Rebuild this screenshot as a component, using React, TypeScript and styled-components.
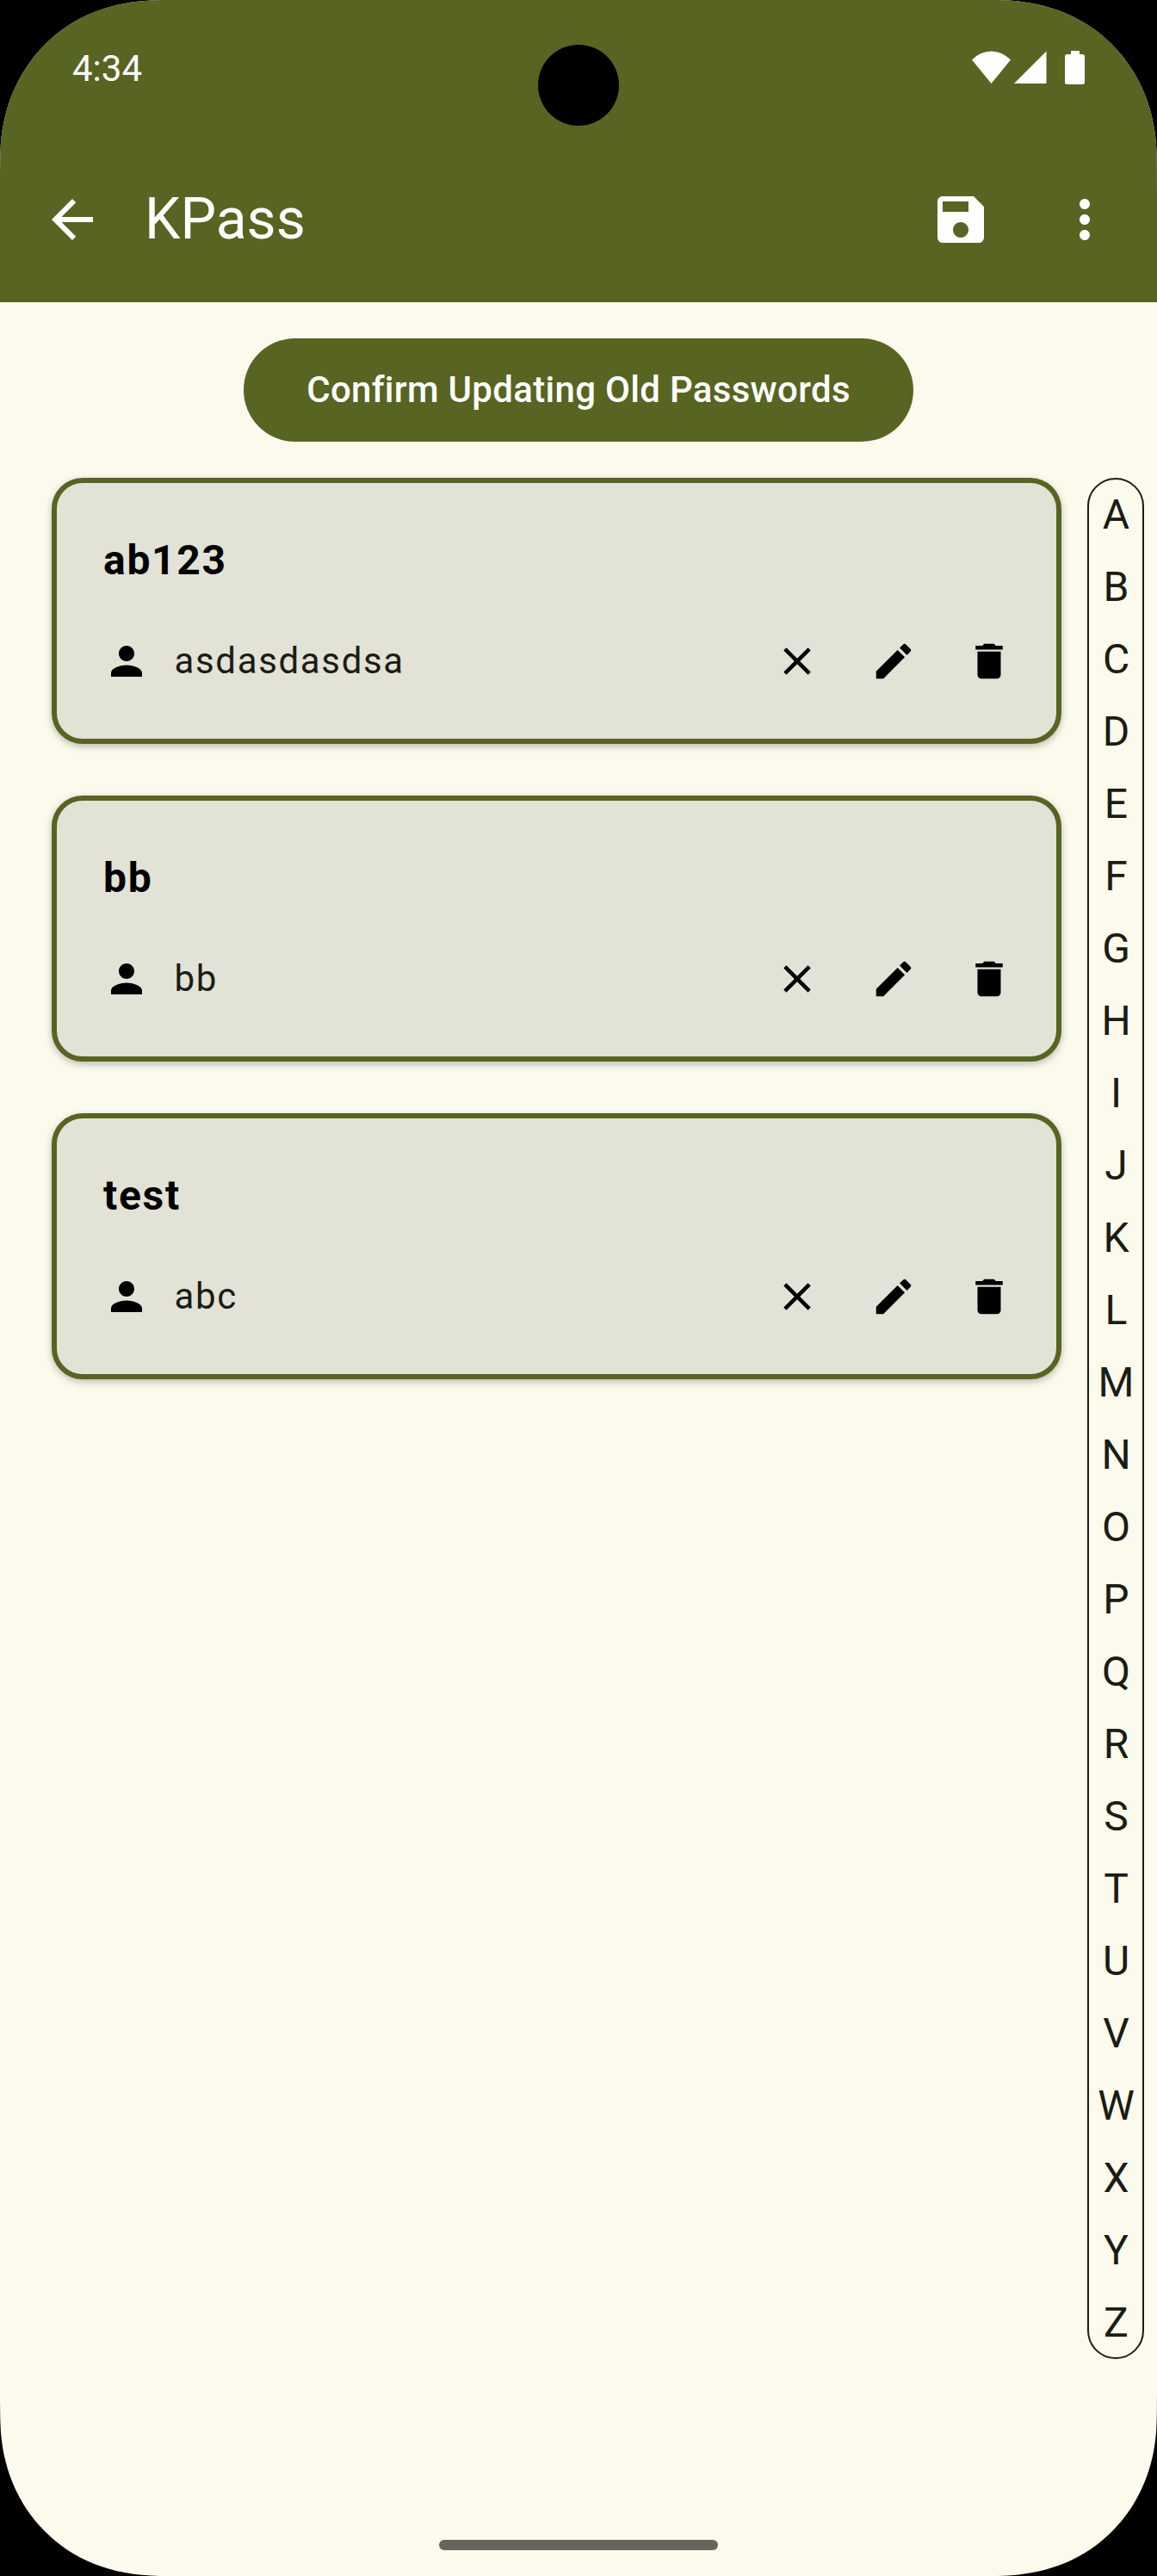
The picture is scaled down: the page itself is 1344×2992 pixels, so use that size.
import React from "react";
import styled, { createGlobalStyle } from "styled-components";

const olive = "#586422";
const paper = "#fcfaec";
const ink = "#1b1c15";

const GlobalStyle = createGlobalStyle`
  * { box-sizing: border-box; }
  body { margin: 0; background: #000; }
`;

const SCREEN_SHAPE =
  "M0 227C0 205 0 190 0.5 176C2 128 20 84 52 52C85 19 128 1 186 0" +
  "H1158C1216 1 1259 19 1292 52C1324 84 1342 128 1343.5 176C1344 190 1344 205 1344 227" +
  "V2765C1344 2787 1344 2802 1343.5 2816C1342 2864 1324 2908 1292 2940C1259 2973 1216 2991 1158 2992" +
  "H186C128 2991 85 2973 52 2940C20 2908 2 2864 0.5 2816C0 2802 0 2787 0 2765Z";

const Screen = styled.div`
  position: relative;
  display: flex;
  flex-direction: column;
  width: 1344px;
  height: 2992px;
  overflow: hidden;
  background: ${paper};
  color: ${ink};
  font-family: Roboto, "Noto Sans", sans-serif;
  clip-path: path("${SCREEN_SHAPE}");
`;

const Header = styled.header`
  height: 351px;
  flex: none;
  background: ${olive};
  color: #fff;
`;

const StatusBar = styled.div`
  display: flex;
  align-items: flex-start;
  justify-content: space-between;
  height: 159px;
  padding: 59px 84px 0;
`;

const Clock = styled.span`
  margin-top: -4px;
  font-size: 42px;
  line-height: 50px;
`;

const StatusIcons = styled.svg`
  width: 131px;
  height: 39px;
`;

const CameraHole = styled.div`
  position: absolute;
  left: 625px;
  top: 52px;
  width: 94px;
  height: 94px;
  border-radius: 50%;
  background: #000;
`;

const AppBar = styled.div`
  display: flex;
  align-items: center;
  height: 192px;
  padding: 0 48px;
`;

const Title = styled.h1`
  flex: 1;
  margin: 0 0 0 48px;
  font-size: 66px;
  line-height: 84px;
  font-weight: 400;
`;

const BarActions = styled.div`
  display: flex;
  gap: 72px;
`;

const Icon = styled.svg<{ $size: number }>`
  display: block;
  width: ${(p) => p.$size}px;
  height: ${(p) => p.$size}px;
  flex: none;
  fill: currentColor;
`;

const ConfirmButton = styled.button`
  align-self: center;
  flex: none;
  width: 778px;
  height: 120px;
  margin: 42px 0;
  padding: 0;
  border: 0;
  border-radius: 60px;
  background: ${olive};
  color: #fff;
  font: 500 42px/60px Roboto, "Noto Sans", sans-serif;
  letter-spacing: 0.3px;
`;

const Content = styled.main`
  display: flex;
  align-items: flex-start;
  justify-content: space-between;
  padding: 0 15px 0 60px;
`;

const CardList = styled.div`
  display: flex;
  flex-direction: column;
  gap: 60px;
  width: 1173px;
`;

const Card = styled.article`
  height: 309px;
  padding: 54px 54px 0;
  border: 6px solid ${olive};
  border-radius: 36px;
  background: #e2e2d6;
  box-shadow: 0 3px 9px rgba(0, 0, 0, 0.26);
`;

const CardTitle = styled.h2`
  margin: 0;
  color: #000;
  font-size: 48px;
  line-height: 72px;
  font-weight: 700;
  letter-spacing: 1.7px;
`;

const CardRow = styled.div`
  display: flex;
  align-items: center;
  height: 54px;
  margin-top: 54px;
  color: #000;
`;

const UserName = styled.span`
  flex: 1;
  margin-left: 28.5px;
  color: ${ink};
  font-size: 42px;
  line-height: 54px;
  letter-spacing: 1.65px;
`;

const CardActions = styled.div`
  display: flex;
  gap: 57.5px;
  margin-right: -3px;
`;

const AlphabetIndex = styled.nav`
  display: flex;
  flex-direction: column;
  width: 66px;
  height: 2185px;
  border: 2px solid ${ink};
  border-radius: 33px;
`;

const Letter = styled.span`
  height: 84px;
  flex: none;
  margin-top: -1px;
  margin-bottom: 1px;
  padding-left: 1px;
  text-align: center;
  font-size: 48px;
  line-height: 84px;
`;

const HomeIndicator = styled.div`
  align-self: center;
  width: 324px;
  height: 12px;
  margin: auto 0 30px;
  border-radius: 6px;
  background: #64665e;
`;

const paths = {
  back: "M20 11H7.83l5.59-5.59L12 4l-8 8 8 8 1.41-1.41L7.83 13H20v-2z",
  save: "M17 3H5c-1.11 0-2 .9-2 2v14c0 1.1.89 2 2 2h14c1.1 0 2-.9 2-2V7l-4-4zm-5 16c-1.66 0-3-1.34-3-3s1.34-3 3-3 3 1.34 3 3-1.34 3-3 3zm3-10H5V5h10v4z",
  more: "M12 8c1.1 0 2-.9 2-2s-.9-2-2-2-2 .9-2 2 .9 2 2 2zm0 2c-1.1 0-2 .9-2 2s.9 2 2 2 2-.9 2-2-.9-2-2-2zm0 6c-1.1 0-2 .9-2 2s.9 2 2 2 2-.9 2-2-.9-2-2-2z",
  person: "M12 12c2.21 0 4-1.79 4-4s-1.79-4-4-4-4 1.79-4 4 1.79 4 4 4zm0 2c-2.67 0-8 1.34-8 4v2h16v-2c0-2.66-5.33-4-8-4z",
  close: "M19 6.41L17.59 5 12 10.59 6.41 5 5 6.41 10.59 12 5 17.59 6.41 19 12 13.41 17.59 19 19 17.59 13.41 12z",
  edit: "M3 17.25V21h3.75L17.81 9.94l-3.75-3.75L3 17.25zM20.71 7.04c.39-.39.39-1.02 0-1.41l-2.34-2.34c-.39-.39-1.02-.39-1.41 0l-1.83 1.83 3.75 3.75 1.83-1.83z",
  remove: "M6 19c0 1.1.9 2 2 2h8c1.1 0 2-.9 2-2V7H6v12zM19 4h-3.5l-1-1h-5l-1 1H5v2h14V4z",
};

function Glyph({ name, size }: { name: keyof typeof paths; size: number }) {
  return (
    <Icon $size={size} viewBox="0 0 24 24" aria-hidden="true">
      <path d={paths[name]} />
    </Icon>
  );
}

const entries = [
  { title: "ab123", user: "asdasdasdsa" },
  { title: "bb", user: "bb" },
  { title: "test", user: "abc" },
];

const letters = "ABCDEFGHIJKLMNOPQRSTUVWXYZ".split("");

export default function App() {
  return (
    <>
      <GlobalStyle />
      <Screen>
        <Header>
          <StatusBar>
            <Clock>4:34</Clock>
            <StatusIcons viewBox="0 0 131 39" fill="#fff">
              <path d="M0 10.5Q10 0.5 22.5 0.5T45 10.5L22.5 38Z" />
              <path d="M49 38L86.5 0.5V38Z" />
              <path d="M115 0h10v4h3.5a2.5 2.5 0 0 1 2.5 2.5v30a2.5 2.5 0 0 1-2.5 2.5h-18a2.5 2.5 0 0 1-2.5-2.5v-30a2.5 2.5 0 0 1 2.5-2.5h4.5z" />
            </StatusIcons>
          </StatusBar>
          <AppBar>
            <Glyph name="back" size={72} />
            <Title>KPass</Title>
            <BarActions>
              <Glyph name="save" size={72} />
              <Glyph name="more" size={72} />
            </BarActions>
          </AppBar>
        </Header>
        <ConfirmButton>Confirm Updating Old Passwords</ConfirmButton>
        <Content>
          <CardList>
            {entries.map((entry) => (
              <Card key={entry.title}>
                <CardTitle>{entry.title}</CardTitle>
                <CardRow>
                  <Glyph name="person" size={54} />
                  <UserName>{entry.user}</UserName>
                  <CardActions>
                    <Glyph name="close" size={54} />
                    <Glyph name="edit" size={54} />
                    <Glyph name="remove" size={54} />
                  </CardActions>
                </CardRow>
              </Card>
            ))}
          </CardList>
          <AlphabetIndex>
            {letters.map((letter) => (
              <Letter key={letter}>{letter}</Letter>
            ))}
          </AlphabetIndex>
        </Content>
        <HomeIndicator />
        <CameraHole />
      </Screen>
    </>
  );
}
